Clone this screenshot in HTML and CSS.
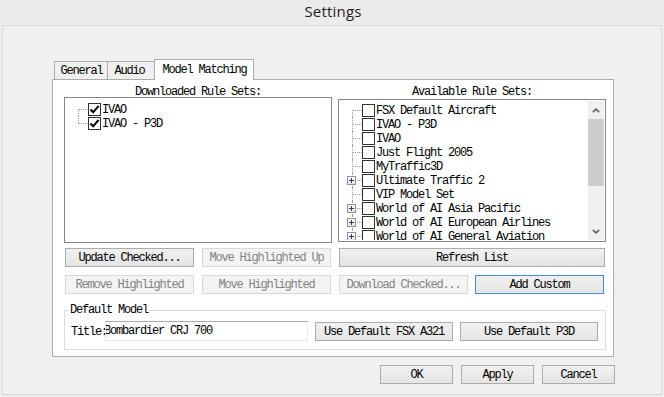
FILE: index.html
```html
<!DOCTYPE html>
<html lang="en">
<head>
    <meta charset="UTF-8">
    <title>Settings</title>
    <link rel="stylesheet" href="styles.css">
</head>
<body>
    <!-- Dialog caption -->
    <div class="titlebar">Settings</div>

    <div class="frame">
        <!-- Tab strip -->
        <div class="tabs">
            <div class="tab tab-general">General</div>
            <div class="tab tab-audio">Audio</div>
            <div class="tab tab-active">Model Matching</div>
        </div>

        <!-- Model Matching page -->
        <div class="pane">
            <div class="lists">
                <div class="list-label">Downloaded Rule Sets:</div>
                <div class="list-label">Available Rule Sets:</div>

                <div class="tree tree-downloaded">
                    <ul class="nodes">
                        <li class="node first">
                            <span class="branch"></span>
                            <span class="check"><svg viewBox="0 0 11 11" width="11" height="11"><path d="M1.5 5.5 L4.2 8.3 L9.6 1.8" fill="none" stroke="#000" stroke-width="2"/></svg></span>
                            <span class="node-text">IVAO</span>
                        </li>
                        <li class="node last">
                            <span class="branch"></span>
                            <span class="check"><svg viewBox="0 0 11 11" width="11" height="11"><path d="M1.5 5.5 L4.2 8.3 L9.6 1.8" fill="none" stroke="#000" stroke-width="2"/></svg></span>
                            <span class="node-text">IVAO - P3D</span>
                        </li>
                    </ul>
                </div>

                <div class="tree tree-available">
                    <ul class="nodes">
                        <li class="node first"><span class="branch"></span><span class="check"></span><span class="node-text">FSX Default Aircraft</span></li>
                        <li class="node"><span class="branch"></span><span class="check"></span><span class="node-text">IVAO - P3D</span></li>
                        <li class="node"><span class="branch"></span><span class="check"></span><span class="node-text">IVAO</span></li>
                        <li class="node"><span class="branch"></span><span class="check"></span><span class="node-text">Just Flight 2005</span></li>
                        <li class="node"><span class="branch"></span><span class="check"></span><span class="node-text">MyTraffic3D</span></li>
                        <li class="node"><span class="branch"><span class="expander"><svg viewBox="0 0 9 9" width="9" height="9"><path d="M2 4.5 H7 M4.5 2 V7" stroke="#1c3f94" stroke-width="1"/></svg></span></span><span class="check"></span><span class="node-text">Ultimate Traffic 2</span></li>
                        <li class="node"><span class="branch"></span><span class="check"></span><span class="node-text">VIP Model Set</span></li>
                        <li class="node"><span class="branch"><span class="expander"><svg viewBox="0 0 9 9" width="9" height="9"><path d="M2 4.5 H7 M4.5 2 V7" stroke="#1c3f94" stroke-width="1"/></svg></span></span><span class="check"></span><span class="node-text">World of AI Asia Pacific</span></li>
                        <li class="node"><span class="branch"><span class="expander"><svg viewBox="0 0 9 9" width="9" height="9"><path d="M2 4.5 H7 M4.5 2 V7" stroke="#1c3f94" stroke-width="1"/></svg></span></span><span class="check"></span><span class="node-text">World of AI European Airlines</span></li>
                        <li class="node"><span class="branch"><span class="expander"><svg viewBox="0 0 9 9" width="9" height="9"><path d="M2 4.5 H7 M4.5 2 V7" stroke="#1c3f94" stroke-width="1"/></svg></span></span><span class="check"></span><span class="node-text">World of AI General Aviation</span></li>
                    </ul>
                    <div class="scrollbar">
                        <div class="sb-arrow"><svg viewBox="0 0 8 5" width="8" height="5"><path d="M0.8 4.2 L4 1.2 L7.2 4.2" fill="none" stroke="#606060" stroke-width="1.6"/></svg></div>
                        <div class="sb-thumb"></div>
                        <div class="sb-space"></div>
                        <div class="sb-arrow"><svg viewBox="0 0 8 5" width="8" height="5"><path d="M0.8 0.8 L4 3.8 L7.2 0.8" fill="none" stroke="#606060" stroke-width="1.6"/></svg></div>
                    </div>
                </div>

                <div class="btn-row">
                    <button class="btn btn-half">Update Checked...</button>
                    <button class="btn btn-half" disabled>Move Highlighted Up</button>
                </div>
                <div class="btn-row">
                    <button class="btn btn-wide">Refresh List</button>
                </div>

                <div class="btn-row btn-row-second">
                    <button class="btn btn-half" disabled>Remove Highlighted</button>
                    <button class="btn btn-half" disabled>Move Highlighted</button>
                </div>
                <div class="btn-row btn-row-second btn-row-right">
                    <button class="btn btn-half" disabled>Download Checked...</button>
                    <button class="btn btn-half btn-default">Add Custom</button>
                </div>

                <!-- Default model group -->
                <fieldset class="group">
                    <legend>Default Model</legend>
                    <div class="group-body">
                        <span class="title-label">Title:</span>
                        <div class="textbox"><span class="textbox-value">Bombardier CRJ 700</span></div>
                        <button class="btn btn-model">Use Default FSX A321</button>
                        <button class="btn btn-model">Use Default P3D</button>
                    </div>
                </fieldset>
            </div>
        </div>

        <!-- Dialog buttons -->
        <div class="dialog-buttons">
            <button class="btn btn-dialog">OK</button>
            <button class="btn btn-dialog">Apply</button>
            <button class="btn btn-dialog">Cancel</button>
        </div>
    </div>
</body>
</html>
```

FILE: styles.css
```css
/* Base */
* {
    box-sizing: border-box;
}

body {
    margin: 0;
    width: 664px;
    height: 397px;
    overflow: hidden;
    background: #ebebeb;
    color: #000;
    font-family: 'Liberation Mono', 'DejaVu Sans Mono', monospace;
    font-size: 12px;
    letter-spacing: -1.2px;
}

/* Caption */
.titlebar {
    height: 25px;
    line-height: 22px;
    text-align: center;
    font-family: 'Open Sans', 'Noto Sans', sans-serif;
    font-size: 15px;
    letter-spacing: 0.2px;
    color: #1e1e1e;
    padding-left: 2px;
}

/* Window body */
.frame {
    margin-left: 2px;
    width: 660px;
    height: 370px;
    border: 1px solid #d9d9d9;
    background: #f0f0f0;
    padding: 33px 0 0 49px;
    display: flex;
    flex-direction: column;
}

/* Tabs */
.tabs {
    display: flex;
    align-items: flex-end;
    height: 20px;
    margin-left: 2px;
}

.tab {
    height: 18px;
    line-height: 19px;
    border: 1px solid #acacac;
    border-bottom: 0;
    background: #f0f0f0;
    text-align: center;
    margin-right: -1px;
    padding-left: 1px;
}

.tab-general {
    width: 54px;
}

.tab-audio {
    width: 48px;
    padding-right: 4px;
}

.tab-active {
    position: relative;
    z-index: 1;
    width: 100px;
    height: 21px;
    line-height: 20px;
    margin-bottom: -1px;
    background: #fff;
}

.pane {
    width: 562px;
    height: 278px;
    border: 1px solid #acacac;
    background: #fff;
    padding: 4px 7px 0 11px;
}

/* Two list columns */
.lists {
    display: grid;
    grid-template-columns: 268px 268px;
    column-gap: 6px;
}

.list-label {
    height: 13px;
    line-height: 17px;
    text-align: center;
}

.tree {
    height: 146px;
    border: 1px solid #828790;
    padding: 1px;
    background: #fff;
    display: flex;
    overflow: hidden;
}

.tree-available {
    height: 143px;
    margin-top: 2px;
}

.nodes {
    list-style: none;
    margin: 0;
    padding: 2px 0 0;
    flex: 1;
    min-width: 0;
    overflow: hidden;
}

.tree-downloaded .nodes {
    padding-top: 3px;
}

.node {
    display: flex;
    align-items: center;
    height: 14px;
    white-space: nowrap;
}

.node-text {
    line-height: 14px;
    padding-top: 1px;
}

.branch {
    position: relative;
    flex: none;
    width: 22px;
    height: 14px;
}

.branch::before {
    content: '';
    position: absolute;
    left: 12px;
    top: 0;
    bottom: 0;
    border-left: 1px dotted #a0a0a0;
}

.node.first .branch::before {
    top: 7px;
}

.node.last .branch::before {
    bottom: 7px;
}

.branch::after {
    content: '';
    position: absolute;
    left: 13px;
    right: 0;
    top: 7px;
    border-top: 1px dotted #a0a0a0;
}

.expander {
    position: absolute;
    z-index: 1;
    left: 7px;
    top: 3px;
    width: 9px;
    height: 9px;
    border: 1px solid #919191;
    background: linear-gradient(#ffffff, #e6e6e6);
    display: flex;
}

.expander svg {
    margin: -1px;
}

.check {
    flex: none;
    width: 13px;
    height: 13px;
    border: 1px solid #333;
    background: #fff;
    margin-right: 1px;
    display: flex;
    align-items: center;
    justify-content: center;
}

/* Scrollbar */
.scrollbar {
    flex: none;
    width: 16px;
    background: #f0f0f0;
    display: flex;
    flex-direction: column;
}

.sb-arrow {
    height: 18px;
    display: flex;
    align-items: center;
    justify-content: center;
}

.sb-thumb {
    height: 67px;
    background: #cdcdcd;
}

.sb-space {
    flex: 1;
}

/* Buttons */
.btn {
    height: 19px;
    padding: 2px 0 0;
    border: 1px solid #acacac;
    border-radius: 0;
    background: linear-gradient(#f1f1f1, #e4e4e4);
    color: #000;
    font: inherit;
    letter-spacing: inherit;
    line-height: 15px;
    text-align: center;
    white-space: nowrap;
}

.btn:disabled {
    border-color: #d9d9d9;
    background: #f4f4f4;
    color: #838383;
}

.btn-default {
    border-color: #3d8ee6;
}

.btn-row {
    display: flex;
    gap: 8px;
    padding: 0 1px;
    margin-top: 5px;
}

.btn-row-second {
    margin-top: 8px;
}

.btn-row-right {
    gap: 7px;
}

.btn-half {
    width: 129px;
}

.btn-wide {
    width: 266px;
}

.btn-model {
    width: 138px;
    margin-left: 7px;
}

.btn-dialog {
    width: 73px;
}

/* Default model group */
.group {
    grid-column: 1 / -1;
    min-width: 0;
    margin: 10px 0 0;
    padding: 4px 7px 8px 6px;
    border: 1px solid #dcdcdc;
}

.group legend {
    padding: 0 1px;
    margin-left: -2px;
    line-height: 13px;
}

.group-body {
    display: flex;
    align-items: center;
}

.title-label {
    flex: none;
    width: 34px;
    padding-top: 1px;
    white-space: nowrap;
}

.textbox {
    flex: none;
    width: 203px;
    height: 20px;
    border: 1px solid;
    border-color: #abadb3 #e3e9ef #e3e9ef #e2e3ea;
    background: #fff;
    overflow: hidden;
    white-space: nowrap;
    line-height: 19px;
}

.textbox-value {
    display: block;
    margin-left: -2px;
}

/* Dialog buttons */
.dialog-buttons {
    display: flex;
    justify-content: flex-end;
    gap: 8px;
    margin-top: 8px;
    padding-right: 46px;
}
```
